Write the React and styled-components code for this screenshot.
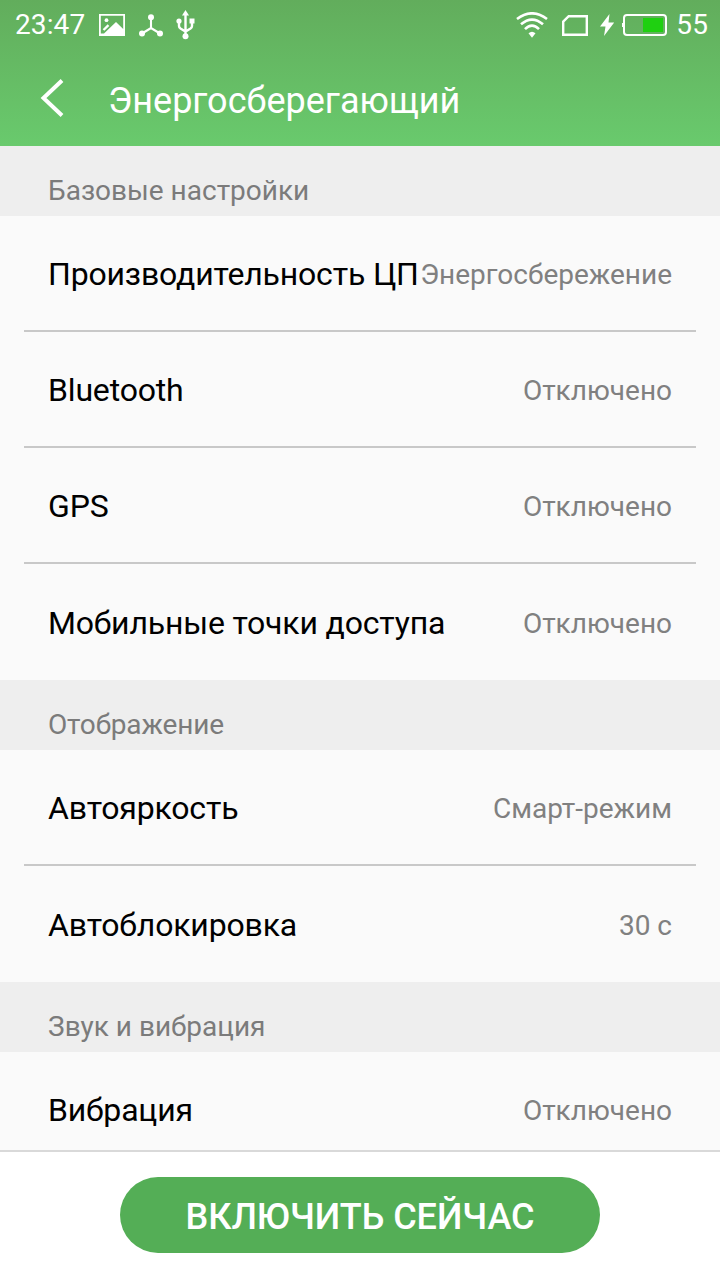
import React from "react";
import styled, { createGlobalStyle } from "styled-components";

const sections = [
  {
    title: "Базовые настройки",
    items: [
      { label: "Производительность ЦП", value: "Энергосбережение" },
      { label: "Bluetooth", value: "Отключено" },
      { label: "GPS", value: "Отключено" },
      { label: "Мобильные точки доступа", value: "Отключено" },
    ],
  },
  {
    title: "Отображение",
    tight: true,
    items: [
      { label: "Автояркость", value: "Смарт-режим" },
      { label: "Автоблокировка", value: "30 с" },
    ],
  },
  {
    title: "Звук и вибрация",
    // the list goes on under the footer
    continues: true,
    items: [{ label: "Вибрация", value: "Отключено" }],
  },
];

const PictureIcon = () => (
  <svg width="26" height="22" viewBox="0 0 26 22">
    <path d="M0 0h26v22H0zM1.800 1.800v17.700H5L17 8l7.200 7V1.800z" fill="#fff" fillRule="evenodd" />
    <circle cx="7.500" cy="6.200" r="1.900" fill="#fff" />
    <path d="M4.500 16l5-4.800" stroke="#fff" strokeWidth="2.400" />
  </svg>
);

const NodesIcon = () => (
  <svg width="24" height="23" viewBox="0 0 24 23">
    <path d="M12 3v11M3 19.500l9-5.500 9 5.500" stroke="#fff" strokeWidth="2.100" fill="none" />
    <circle cx="12" cy="3.200" r="3" fill="#fff" />
    <circle cx="3" cy="19.500" r="3" fill="#fff" />
    <circle cx="21" cy="19.500" r="3" fill="#fff" />
  </svg>
);

const UsbIcon = () => (
  <svg width="19" height="30" viewBox="0 0 19 30">
    <path d="M9.500 4v22M3 11v5q0 1.500 1.500 2.500l5 3 5-3q1.500-1 1.500-2.500V11" stroke="#fff" strokeWidth="2.400" fill="none" />
    <path d="M9.500 0l3.500 5.500H6z" fill="#fff" />
    <circle cx="3" cy="11" r="2.600" fill="#fff" />
    <path d="M13.500 8.500h5v5h-5z" fill="#fff" />
    <circle cx="9.500" cy="26.200" r="3" fill="#fff" />
  </svg>
);

const WifiIcon = () => (
  <svg width="32" height="26" viewBox="0 0 32 26">
    <g stroke="#fff" strokeWidth="2.600" fill="none">
      <path d="M1 7Q16-4.400 31 7" />
      <path d="M5 12.300Q16 2.800 27 12.300" />
      <path d="M9 17.200Q16 10 23 17.200" />
    </g>
    <path d="M12.500 21.300q3.500-3 7 0L16 25.800z" fill="#fff" />
  </svg>
);

const SimIcon = () => (
  <svg width="26" height="21" viewBox="0 0 26 21">
    <path d="M1.200 6.700L6.700 1.200h18.100v18.600H1.200z" stroke="#fff" strokeWidth="2.400" fill="none" />
  </svg>
);

const BoltIcon = () => (
  <svg width="14" height="22" viewBox="0 0 14 22">
    <path d="M9.500 0L0 12.500h5.500L4 22 14.200 8.500H8.500z" fill="#fff" />
  </svg>
);

const BatteryIcon = () => (
  <svg width="45" height="22" viewBox="0 0 45 22">
    <rect x="2" y="1" width="42" height="20" rx="3" stroke="#fff" strokeWidth="2" fill="none" />
    <path d="M0 9h2v4H0z" fill="#fff" />
    <path d="M21 4h20v14H21z" fill="#1fd011" />
  </svg>
);

const BackIcon = () => (
  <svg width="24" height="38" viewBox="0 0 24 38">
    <path d="M22 1.500L3.500 19 22 36.500" stroke="#fff" strokeWidth="4" fill="none" />
  </svg>
);

const App = () => {
  return (
    <Screen>
      <GlobalStyle />
      <Header>
        <StatusBar>
          <StatusGroup>
            <StatusText>23:47</StatusText>
            <IconBox $left={14}>
              <PictureIcon />
            </IconBox>
            <IconBox $left={14}>
              <NodesIcon />
            </IconBox>
            <IconBox $left={13}>
              <UsbIcon />
            </IconBox>
          </StatusGroup>
          <StatusGroup>
            <WifiIcon />
            <IconBox $left={14}>
              <SimIcon />
            </IconBox>
            <IconBox $left={12}>
              <BoltIcon />
            </IconBox>
            <IconBox $left={8}>
              <BatteryIcon />
            </IconBox>
            <StatusText $left={9}>55</StatusText>
          </StatusGroup>
        </StatusBar>
        <TitleBar>
          <BackButton aria-label="Назад">
            <BackIcon />
          </BackButton>
          <Title>Энергосберегающий</Title>
        </TitleBar>
      </Header>
      <Settings>
        {sections.map((section) => (
          <section key={section.title}>
            <SectionTitle $tight={section.tight}>{section.title}</SectionTitle>
            <List>
              {section.items.map((item, index) => (
                <Row
                  key={item.label}
                  $divider={section.continues || index < section.items.length - 1}
                >
                  <Label>{item.label}</Label>
                  <Value>{item.value}</Value>
                </Row>
              ))}
            </List>
          </section>
        ))}
      </Settings>
      <Footer>
        <EnableButton>ВКЛЮЧИТЬ СЕЙЧАС</EnableButton>
      </Footer>
    </Screen>
  );
};

const GlobalStyle = createGlobalStyle`
  * {
    box-sizing: border-box;
  }
  body {
    margin: 0;
    font-family: Roboto, "Noto Sans", sans-serif;
  }
  svg {
    display: block;
    flex-shrink: 0;
  }
`;

const Screen = styled.div`
  display: flex;
  flex-direction: column;
  width: 720px;
  height: 1280px;
  overflow: hidden;
  background-color: #fafafa;
`;

const Header = styled.header`
  flex-shrink: 0;
  height: 146px;
  color: #fff;
  background: linear-gradient(#62ad5c, #69ca6d);
`;

const StatusBar = styled.div`
  display: flex;
  justify-content: space-between;
  height: 50px;
  padding: 0 12px 0 15px;
`;

const StatusGroup = styled.div`
  display: flex;
  align-items: center;
`;

const StatusText = styled.span`
  margin-left: ${(props) => props.$left || 0}px;
  font-size: 28px;
  line-height: 48px;
  letter-spacing: 0.1px;
`;

const IconBox = styled.span`
  margin-left: ${(props) => props.$left}px;
`;

const TitleBar = styled.div`
  display: flex;
  align-items: center;
  height: 96px;
  padding-left: 40px;
`;

const BackButton = styled.button`
  padding: 0;
  border: none;
  background: none;
  cursor: pointer;
`;

const Title = styled.h1`
  margin: 0 0 0 44px;
  padding-top: 5px;
  font-size: 36px;
  font-weight: 400;
  line-height: 44px;
`;

const Settings = styled.main`
  flex: 1;
  min-height: 0;
  overflow: hidden;
`;

const SectionTitle = styled.h2`
  height: 70px;
  margin: 0;
  padding: 28px 48px 0;
  font-size: 28px;
  font-weight: 400;
  line-height: 33px;
  letter-spacing: ${(props) => (props.$tight ? "-0.15px" : "normal")};
  color: #7b7b7b;
  background-color: #eee;
`;

const List = styled.ul`
  margin: 0;
  padding: 0 24px;
  list-style: none;
`;

const Row = styled.li`
  display: flex;
  align-items: center;
  justify-content: space-between;
  height: 116px;
  padding: 2px 24px 0;
  white-space: nowrap;
  border-bottom: ${(props) => (props.$divider ? "2px solid #c8c8c8" : "none")};
`;

const Label = styled.span`
  font-size: 32px;
  line-height: 38px;
  letter-spacing: -0.17px;
  color: #000;
`;

const Value = styled.span`
  padding-top: 2px;
  font-size: 28px;
  line-height: 34px;
  color: #808080;
`;

const Footer = styled.footer`
  display: flex;
  flex-shrink: 0;
  justify-content: center;
  height: 130px;
  padding-top: 25px;
  border-top: 2px solid #d9d9d9;
  background-color: #fff;
`;

const EnableButton = styled.button`
  width: 480px;
  height: 76px;
  padding: 4px 0 0;
  border: none;
  border-radius: 38px;
  font-family: inherit;
  font-size: 36px;
  font-weight: 500;
  letter-spacing: -0.05px;
  color: #fff;
  background-color: #54ae56;
  cursor: pointer;
`;

export default App;
